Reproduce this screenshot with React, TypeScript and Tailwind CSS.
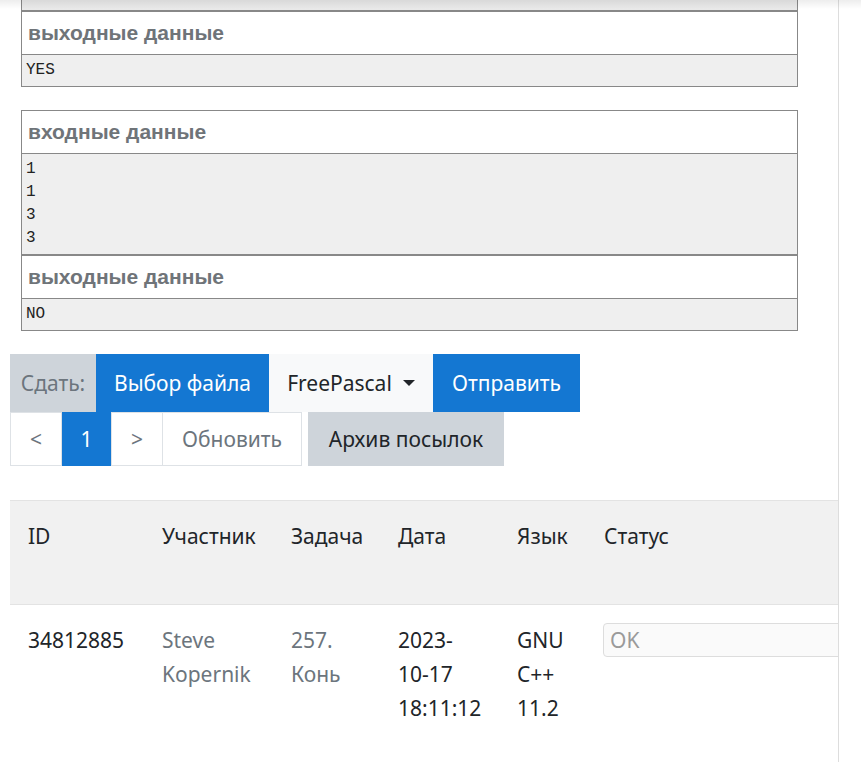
import React from "react";

const ui = { fontFamily: '"Noto Sans", "Open Sans", sans-serif' };
const cf = { fontFamily: '"Liberation Sans", Arial, sans-serif' };
const mono = { fontFamily: '"Liberation Mono", "DejaVu Sans Mono", monospace' };

function Part({ title, lines }: { title: string; lines: string[] }) {
  return (
    <div className="border border-[#888]">
      <div
        className="h-[43px] flex items-center px-[6px] text-[21px] font-bold text-[#6f7479] bg-white border-b border-[#888]"
        style={cf}
      >
        {title}
      </div>
      <pre
        className="bg-[#efefef] px-[4px] py-[4px] text-[16px] leading-[23px] text-[#222] m-0"
        style={mono}
      >
        {lines.join("\n")}
      </pre>
    </div>
  );
}

const cols = [
  { name: "ID", w: "w-[134px]" },
  { name: "Участник", w: "w-[129px]" },
  { name: "Задача", w: "w-[107px]" },
  { name: "Дата", w: "w-[119px]" },
  { name: "Язык", w: "w-[87px]" },
];

export default function App() {
  return (
    <div className="relative w-[861px] h-[762px] bg-white overflow-hidden" style={ui}>
      <div className="w-[839px] h-full border-r border-[#ddd] overflow-hidden pl-[10px]">
        {/* tail of the previous sample */}
        <div className="ml-[11px] w-[777px]">
          <div className="h-[11px] bg-[#e9e9e9] border-x border-b border-[#888]" />
          <Part title="выходные данные" lines={["YES"]} />

          <div className="mt-[23px]">
            <Part title="входные данные" lines={["1", "1", "3", "3"]} />
            <Part title="выходные данные" lines={["NO"]} />
          </div>
        </div>

        {/* submit bar */}
        <div className="mt-[23px] flex text-[21px] leading-[30px]">
          <div className="h-[58px] w-[86px] flex items-center justify-center bg-[#ced4da] text-[#6c757d]">Сдать:</div>
          <div className="h-[58px] w-[173px] flex items-center justify-center bg-[#1477d2] text-white">Выбор файла</div>
          <div className="h-[58px] w-[164px] flex items-center justify-center bg-[#f8f9fa] text-[#212529]">
            FreePascal
            <span className="ml-[11px] inline-block w-0 h-0 border-x-[6px] border-x-transparent border-t-[6px] border-t-[#212529]" />
          </div>
          <div className="h-[58px] w-[147px] flex items-center justify-center bg-[#1477d2] text-white">Отправить</div>
        </div>

        <div className="flex text-[21px] leading-[30px]">
          <div className="flex">
            <div className="h-[54px] w-[52px] flex items-center justify-center border border-[#dee2e6] text-[#6c757d]">&lt;</div>
            <div className="h-[54px] w-[49px] flex items-center justify-center bg-[#1477d2] text-white">1</div>
            <div className="h-[54px] w-[52px] flex items-center justify-center border border-[#dee2e6] text-[#6c757d]">&gt;</div>
            <div className="h-[54px] w-[139px] flex items-center justify-center border border-l-0 border-[#dee2e6] text-[#6c757d]">Обновить</div>
          </div>
          <div className="ml-[6px] h-[54px] w-[196px] flex items-center justify-center bg-[#ced4da] text-[#212529]">Архив посылок</div>
        </div>

        {/* submissions table */}
        <div className="mt-[34px] text-[21px] leading-[34px] text-[#212529]">
          <div className="flex h-[105px] bg-[#f1f1f1] border-y border-[#e3e3e3]">
            {cols.map((c) => (
              <div key={c.name} className={`${c.w} shrink-0 px-[18px] pt-[18px]`}>
                {c.name}
              </div>
            ))}
            <div className="flex-1 px-[18px] pt-[18px]">Статус</div>
          </div>
          <div className="flex">
            <div className="w-[134px] shrink-0 px-[18px] pt-[18px]">34812885</div>
            <div className="w-[129px] shrink-0 px-[18px] pt-[18px] text-[#6c757d]">
              Steve
              <br />
              Kopernik
            </div>
            <div className="w-[107px] shrink-0 px-[18px] pt-[18px] text-[#6c757d]">
              257.
              <br />
              Конь
            </div>
            <div className="w-[119px] shrink-0 px-[18px] pt-[18px]">
              2023-
              <br />
              10-17
              <br />
              18:11:12
            </div>
            <div className="w-[87px] shrink-0 px-[18px] pt-[18px]">
              GNU
              <br />
              C++
              <br />
              11.2
            </div>
            <div className="flex-1 pl-[17px] pt-[18px]">
              <div className="w-[260px] h-[34px] px-[6px] flex items-center bg-[#fafafa] border border-[#ddd] rounded-[4px] text-[#9a9a9a]">
                OK
              </div>
            </div>
          </div>
        </div>
      </div>
      <div className="pointer-events-none absolute top-0 left-0 right-0 h-[9px] bg-gradient-to-b from-black/[0.07] to-transparent" />
    </div>
  );
}
